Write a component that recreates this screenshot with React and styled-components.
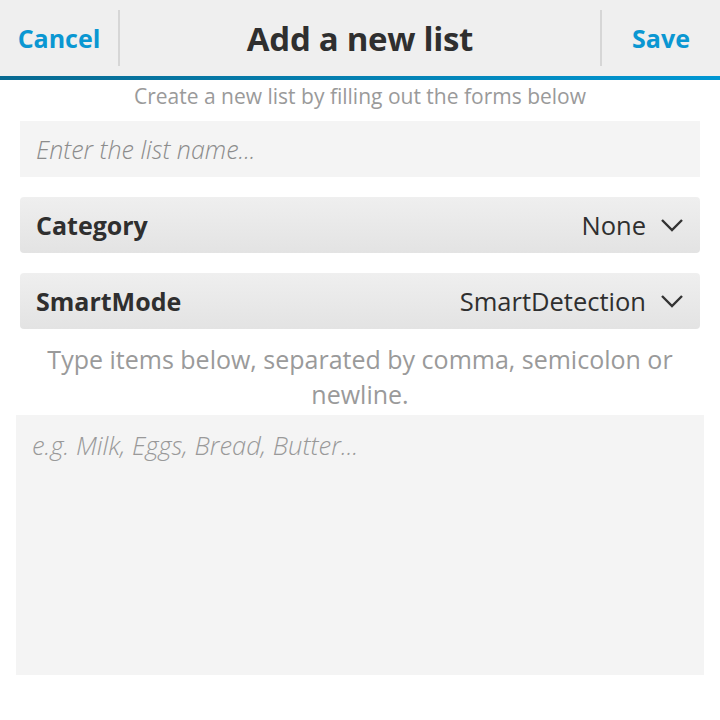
import React from "react";
import styled, { createGlobalStyle } from "styled-components";

const GlobalStyle = createGlobalStyle`
  html, body {
    margin: 0;
    padding: 0;
    background: #ffffff;
    font-family: "Open Sans", "Liberation Sans", sans-serif;
  }
`;

const Page = styled.div`
  width: 720px;
  height: 720px;
  display: flex;
  flex-direction: column;
  background: #fff;
  overflow: hidden;
`;

const TitleBar = styled.div`
  height: 76px;
  display: flex;
  align-items: center;
  background: #efefef;
  border-bottom: 4px solid transparent;
  border-image: linear-gradient(to right, #086a91, #0097d3) 1;
`;

const BarButton = styled.div`
  width: ${(p) => p.width}px;
  height: 56px;
  display: flex;
  align-items: center;
  justify-content: center;
  color: #0a97d2;
  font-size: 25px;
  font-weight: 700;
  box-sizing: border-box;
  border-${(p) => p.side}: 2px solid #d6d6d6;
`;

const Title = styled.div`
  flex: 1;
  text-align: center;
  font-size: 33px;
  font-weight: 700;
  color: #2f2f2f;
  letter-spacing: -0.3px;
`;

const Hint = styled.div`
  text-align: center;
  color: #9a9a9a;
  font-size: ${(p) => p.size}px;
  line-height: ${(p) => p.lh}px;
  padding: ${(p) => p.pad};
`;

const Form = styled.div`
  display: flex;
  flex-direction: column;
  padding: 0 20px;
  gap: 20px;
`;

const TextField = styled.div`
  height: 56px;
  display: flex;
  align-items: center;
  padding: 0 16px;
  background: #f4f4f4;
  color: #8c8c8c;
  font-style: italic;
  font-weight: 300;
  font-size: 25px;
`;

const Dropdown = styled.div`
  height: 56px;
  display: flex;
  align-items: center;
  justify-content: space-between;
  padding: 0 16px;
  border-radius: 4px;
  background: linear-gradient(#efefef, #e3e3e3);
`;

const DropLabel = styled.span`
  font-size: 25px;
  font-weight: 700;
  color: #2f2f2f;
`;

const DropValue = styled.span`
  display: flex;
  align-items: center;
  gap: 14px;
  font-size: 25.5px;
  color: #2f2f2f;
`;

const ItemsArea = styled.div`
  margin: 0 16px;
  height: 260px;
  background: #f4f4f4;
  padding: 13px 16px;
  box-sizing: border-box;
  color: #999;
  font-style: italic;
  font-weight: 300;
  font-size: 25.5px;
`;

const Chevron = () => (
  <svg width="24" height="14" viewBox="0 0 24 14">
    <path d="M2 2 L12 12 L22 2" fill="none" stroke="#333" strokeWidth="2.4" />
  </svg>
);

const App = () => {
  const selects = [
    { label: "Category", value: "None" },
    { label: "SmartMode", value: "SmartDetection" },
  ];

  return (
    <Page>
      <GlobalStyle />
      <TitleBar>
        <BarButton width={120} side="right">Cancel</BarButton>
        <Title>Add a new list</Title>
        <BarButton width={120} side="left">Save</BarButton>
      </TitleBar>
      <Hint size={21} lh={32} pad="0 0 9px">
        Create a new list by filling out the forms below
      </Hint>
      <Form>
        <TextField>Enter the list name...</TextField>
        {selects.map((s) => (
          <Dropdown key={s.label}>
            <DropLabel>{s.label}</DropLabel>
            <DropValue>
              {s.value}
              <Chevron />
            </DropValue>
          </Dropdown>
        ))}
      </Form>
      <Hint size={25} lh={35} pad="13px 30px 3px">
        Type items below, separated by comma, semicolon or newline.
      </Hint>
      <ItemsArea>e.g. Milk, Eggs, Bread, Butter...</ItemsArea>
    </Page>
  );
};

export default App;
